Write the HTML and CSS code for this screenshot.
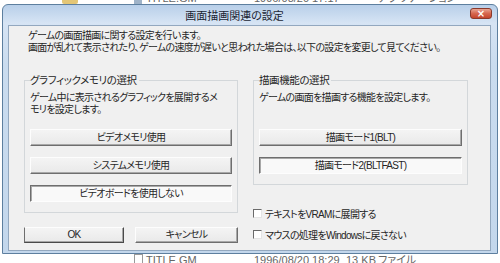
FILE: index.html
```html
<!DOCTYPE html>
<html lang="ja">
<head>
  <meta charset="UTF-8" />
  <title>画面描画関連の設定</title>
  <link rel="stylesheet" href="styles.css">
</head>
<body>
  <!-- file list behind the dialog, only its edges show -->
  <div class="list-row top">
    <span class="cell c-lead"><span class="folder-ico"></span></span>
    <span class="cell c-icon"><span class="app-ico"></span></span>
    <span class="cell c-name">TITLE.GM</span>
    <span class="cell c-date">1996/08/20 17:17</span>
    <span class="cell c-size"></span>
    <span class="cell c-type">アプリケーション</span>
  </div>

  <div class="window">
    <div class="titlebar">
      <span class="title">画面描画関連の設定</span>
    </div>
    <button class="close" title="閉じる">×</button>

    <div class="client">
      <p class="intro">ゲームの画面描画に関する設定を行います。<br>画面が乱れて表示されたり、ゲームの速度が遅いと思われた場合は、以下の設定を変更して見てください。</p>

      <div class="columns">
        <div class="col">
          <fieldset class="group">
            <legend>グラフィックメモリの選択</legend>
            <p class="desc">ゲーム中に表示されるグラフィックを展開するメ<br>モリを設定します。</p>
            <div class="btn-stack">
              <button class="btn">ビデオメモリ使用</button>
              <button class="btn">システムメモリ使用</button>
              <button class="btn pressed">ビデオボードを使用しない</button>
            </div>
          </fieldset>

          <div class="dlg-buttons">
            <button class="btn default ok">OK</button>
            <button class="btn cancel">キャンセル</button>
          </div>
        </div>

        <div class="col">
          <fieldset class="group">
            <legend>描画機能の選択</legend>
            <p class="desc">ゲームの画面を描画する機能を設定します。</p>
            <div class="btn-stack">
              <button class="btn">描画モード1(BLT)</button>
              <button class="btn pressed">描画モード2(BLTFAST)</button>
            </div>
          </fieldset>

          <div class="checks">
            <label class="check"><span class="box"></span>テキストをVRAMに展開する</label>
            <label class="check"><span class="box"></span>マウスの処理をWindowsに戻さない</label>
          </div>
        </div>
      </div>
    </div>
  </div>

  <div class="list-row bottom">
    <span class="cell c-lead"></span>
    <span class="cell c-icon"><span class="file-ico"></span></span>
    <span class="cell c-name">TITLE.GM</span>
    <span class="cell c-date">1996/08/20 18:29</span>
    <span class="cell c-size">13 KB</span>
    <span class="cell c-type">ファイル</span>
  </div>
</body>
</html>
```

FILE: styles.css
```css
* {
  box-sizing: border-box;
}
body {
  margin: 0;
  width: 500px;
  height: 263px;
  overflow: hidden;
  background: #fff;
  font-family: "Liberation Sans", "Noto Sans CJK JP", sans-serif;
  font-size: 10px;
  letter-spacing: -0.7px;
  font-feature-settings: "palt";
  color: #262626;
}
p {
  margin: 0;
}

/* list behind the dialog */
.list-row {
  display: flex;
  overflow: hidden;
  color: #666;
  font-size: 11px;
  letter-spacing: 0;
  line-height: 12px;
}
.list-row.top {
  height: 4px;
  align-items: flex-end;
}
.list-row.bottom {
  height: 9px;
  align-items: flex-start;
}
.cell {
  flex: none;
  white-space: nowrap;
}
.c-lead {
  width: 134px;
  padding-left: 62px;
}
.c-icon {
  width: 12px;
}
.c-name {
  width: 108px;
}
.c-date {
  width: 92px;
}
.c-size {
  width: 32px;
}
.c-type {
  width: 80px;
}
.folder-ico {
  display: block;
  width: 16px;
  height: 12px;
  border-radius: 2px;
  background: #e3c676;
}
.app-ico {
  display: block;
  width: 8px;
  height: 12px;
  background: #9fb3c8;
}
.file-ico {
  display: block;
  width: 9px;
  height: 12px;
  border: 1px solid #999;
  background: #fff;
}

/* dialog window */
.window {
  position: relative;
  margin-left: 2px;
  width: 496px;
  height: 250px;
  border: 1px solid #5d7f9f;
  border-radius: 6px 6px 0 0;
  background: linear-gradient(#b8cfe9, #d6e4f4 18px, #cadcef 60px, #c3d7ec);
  padding: 0 6px 2px 5px;
  display: flex;
  flex-direction: column;
}
.titlebar {
  height: 20px;
  display: flex;
  align-items: center;
  justify-content: center;
  padding-right: 30px;
}
.title {
  font-size: 11px;
  letter-spacing: 0;
  color: #1b2533;
}
.close {
  position: absolute;
  top: 3px;
  right: 5px;
  width: 22px;
  height: 11px;
  padding: 0;
  border: 1px solid #8a3a2c;
  border-radius: 3px;
  background: linear-gradient(#e9a593, #d6674f 50%, #c4452c);
  color: #fff;
  font-family: "DejaVu Sans", sans-serif;
  font-size: 10px;
  font-weight: bold;
  letter-spacing: 0;
  line-height: 8px;
}

.client {
  flex: 1;
  border: 1px solid #93a8bf;
  background: #f0f0f0;
  padding: 4px 20px 0 15px;
}
.intro {
  margin-left: 4px;
  line-height: 12px;
  white-space: nowrap;
}

.columns {
  display: grid;
  grid-template-columns: 214px 215px;
  column-gap: 15px;
  margin-top: 20px;
}

.group {
  margin: 0;
  border: 1px solid #d3d7da;
  padding: 6px 5px 0 5px;
}
.group legend {
  margin-left: 0;
  padding: 0 2px 0 0;
  font-size: 10.5px;
  letter-spacing: -0.4px;
  line-height: 12px;
}
.desc {
  min-height: 24px;
  line-height: 12px;
  white-space: nowrap;
}
.btn-stack {
  display: flex;
  flex-direction: column;
  gap: 11px;
  margin-top: 13px;
  padding-bottom: 10px;
}

.btn {
  display: block;
  width: 100%;
  height: 17px;
  padding: 0;
  font: inherit;
  letter-spacing: inherit;
  line-height: 14px;
  color: #262626;
  background: linear-gradient(#f4f4f4, #e9e9e9);
  border: 1px solid;
  border-color: #fdfdfd #6e6e6e #6e6e6e #fdfdfd;
  box-shadow: inset -1px -1px 0 #a8a8a8;
}
.btn.pressed {
  background: #f9f9f9;
  border-color: #6e6e6e #fdfdfd #fdfdfd #6e6e6e;
  box-shadow: inset 1px 1px 0 #a8a8a8;
}

.dlg-buttons {
  display: flex;
  gap: 11px;
  margin-top: 14px;
}
.dlg-buttons .btn {
  height: 16px;
}
.dlg-buttons .ok {
  width: 100px;
}
.dlg-buttons .cancel {
  width: 103px;
}
.btn.default {
  border-color: #fdfdfd #4a4a4a #4a4a4a #6e6e6e;
}

.checks {
  display: flex;
  flex-direction: column;
  margin-top: 18px;
}
.check {
  display: flex;
  align-items: center;
  height: 21px;
  white-space: nowrap;
}
.box {
  flex: none;
  width: 9px;
  height: 9px;
  margin: 0 3px 0 0;
  border: 1px solid;
  border-color: #6a6a6a #e4e4e4 #e4e4e4 #6a6a6a;
  background: #fff;
}
```
